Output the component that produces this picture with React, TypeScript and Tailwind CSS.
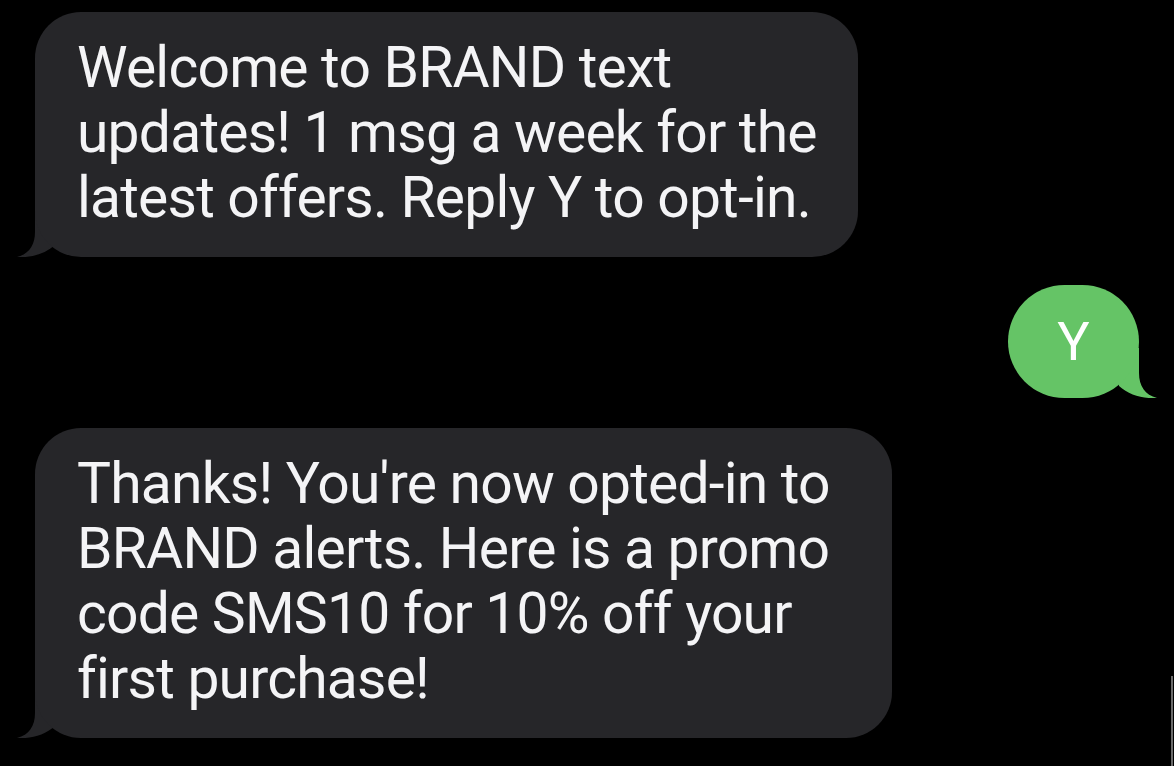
import React from "react"

const font = { fontFamily: "Roboto, 'Noto Sans', 'Liberation Sans', sans-serif" }

// iOS style tail, drawn under the bottom corner of a bubble
function Tail({ color, side }: { color: string; side: "left" | "right" }) {
  return (
    <svg
      width="60"
      height="50"
      viewBox="0 0 60 50"
      className={side === "left" ? "absolute -left-[20px] bottom-0" : "absolute -right-[20px] bottom-0 -scale-x-100"}
    >
      <path d="M20 0 L20 25 C20 38 14 47 2 50 C16 51 30 47 40 38 L40 0 Z" fill={color} />
    </svg>
  )
}

function Received({ lines, width }: { lines: string[]; width: string }) {
  return (
    <div className={`relative self-start ${width}`}>
      <Tail color="#262629" side="left" />
      <div className="relative rounded-[46px] bg-[#262629] pl-[42px] pr-[40px] pt-[23px] pb-[27px] text-[57px] leading-[65px] text-[#f4f4f6] tracking-[-0.8px]">
        {lines.map((l, i) => (
          <div key={i} className="whitespace-nowrap">
            {l}
          </div>
        ))}
      </div>
    </div>
  )
}

export default function App() {
  return (
    <div className="relative h-[766px] w-full overflow-hidden bg-black" style={font}>
      <div className="flex flex-col px-[35px] pt-[12px]">
        {/* Welcome message */}
        <Received
          width="w-[823px]"
          lines={["Welcome to BRAND text", "updates! 1 msg a week for the", "latest offers. Reply Y to opt-in."]}
        />

        {/* Reply */}
        <div className="relative mt-[28px] mb-[30px] self-end">
          <Tail color="#65c466" side="right" />
          <div className="relative flex h-[113px] w-[131px] items-center justify-center rounded-full bg-[#65c466] text-[54px] leading-none text-white">
            Y
          </div>
        </div>

        {/* Confirmation */}
        <Received
          width="w-[857px]"
          lines={[
            "Thanks! You're now opted-in to",
            "BRAND alerts. Here is a promo",
            "code SMS10 for 10% off your",
            "first purchase!",
          ]}
        />
      </div>

      {/* screenshot edge artifact */}
      <div className="absolute right-[1px] top-[676px] h-[90px] w-[2px] bg-[#6b6b6b]" />
    </div>
  )
}
